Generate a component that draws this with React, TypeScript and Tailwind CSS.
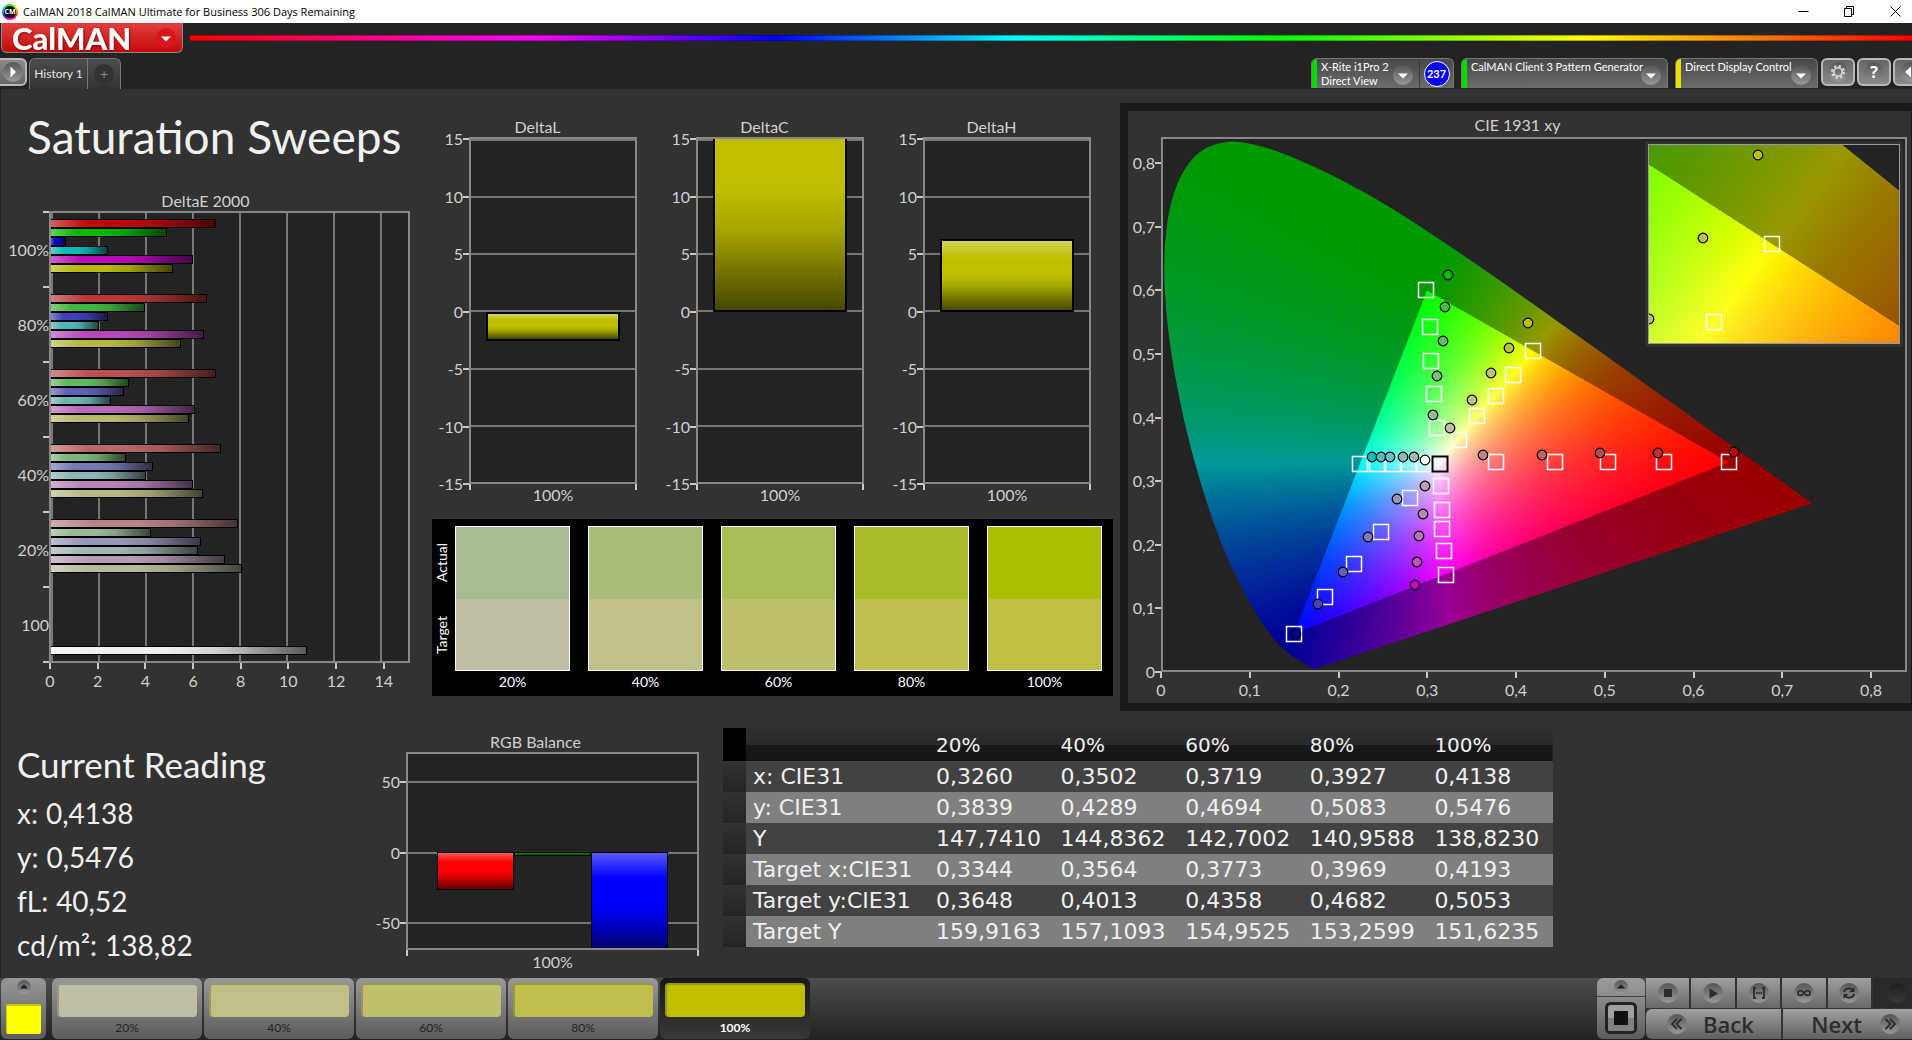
import { useEffect, useRef } from "react";
import type { ReactNode } from "react";

/* ---------- CIE 1931 data ---------- */

const LOCUS: [number, number][] = [
  [0.1741, 0.005], [0.1726, 0.0048], [0.1714, 0.0051], [0.1689, 0.0069], [0.1644, 0.0109],
  [0.1566, 0.0177], [0.151, 0.0227], [0.144, 0.0297], [0.1355, 0.0399], [0.1241, 0.0578],
  [0.1096, 0.0868], [0.0913, 0.1327], [0.0687, 0.2007], [0.0454, 0.295], [0.0235, 0.4127],
  [0.0082, 0.5384], [0.0039, 0.6548], [0.0139, 0.7502], [0.0389, 0.812], [0.0743, 0.8338],
  [0.1142, 0.8262], [0.1547, 0.8059], [0.1929, 0.7816], [0.2296, 0.7543], [0.2658, 0.7243],
  [0.3016, 0.6923], [0.3373, 0.6589], [0.3731, 0.6245], [0.4087, 0.5896], [0.4441, 0.5547],
  [0.4788, 0.5202], [0.5125, 0.4866], [0.5448, 0.4544], [0.5752, 0.4242], [0.6029, 0.3965],
  [0.627, 0.3725], [0.6658, 0.334], [0.6915, 0.3083], [0.719, 0.2809], [0.7347, 0.2653],
];

/* Colour of a chromaticity; dimmed where it lies outside the RGB triangle. */
function colourAt(x: number, y: number): [number, number, number] {
  const X = x / y;
  const Z = (1 - x - y) / y;
  const lin = [
    3.2406 * X - 1.5372 - 0.4986 * Z,
    -0.9689 * X + 1.8758 + 0.0415 * Z,
    0.0557 * X - 0.204 + 1.057 * Z,
  ];
  const gain = Math.min(...lin) >= 0 ? 255 : 153;
  const max = Math.max(...lin);
  const [r, g, b] = lin.map((v) => (gain * Math.max(v, 0)) / max);
  return [r, g, b];
}

type Domain = { x0: number; x1: number; y0: number; y1: number };

function Gamut({ x0, x1, y0, y1, w, h }: Domain & { w: number; h: number }) {
  const ref = useRef<HTMLCanvasElement>(null);
  useEffect(() => {
    const ctx = ref.current?.getContext("2d");
    if (!ctx) return;
    const W = w * 2;
    const H = h * 2;
    const field = document.createElement("canvas");
    field.width = W;
    field.height = H;
    const fctx = field.getContext("2d")!;
    const img = fctx.createImageData(W, H);
    for (let j = 0; j < H; j++) {
      const y = Math.max(y1 - ((j + 0.5) / H) * (y1 - y0), 0.001);
      for (let i = 0; i < W; i++) {
        const [r, g, b] = colourAt(x0 + ((i + 0.5) / W) * (x1 - x0), y);
        const k = (j * W + i) * 4;
        img.data[k] = r;
        img.data[k + 1] = g;
        img.data[k + 2] = b;
        img.data[k + 3] = 255;
      }
    }
    fctx.putImageData(img, 0, 0);
    const pts = LOCUS.map(([x, y]) => [((x - x0) / (x1 - x0)) * w, ((y1 - y) / (y1 - y0)) * h]);
    const at = (i: number) => pts[Math.min(Math.max(i, 0), pts.length - 1)];
    ctx.clearRect(0, 0, w, h);
    ctx.save();
    ctx.beginPath();
    ctx.moveTo(pts[0][0], pts[0][1]);
    for (let i = 0; i < pts.length - 1; i++) {
      const [p, a, b, n] = [at(i - 1), at(i), at(i + 1), at(i + 2)];
      ctx.bezierCurveTo(
        a[0] + (b[0] - p[0]) / 6,
        a[1] + (b[1] - p[1]) / 6,
        b[0] - (n[0] - a[0]) / 6,
        b[1] - (n[1] - a[1]) / 6,
        b[0],
        b[1],
      );
    }
    ctx.closePath();
    ctx.clip();
    ctx.drawImage(field, 0, 0, w, h);
    ctx.restore();
  }, [x0, x1, y0, y1, w, h]);
  return <canvas ref={ref} width={w} height={h} className="block h-full w-full" />;
}

/* Targets and measurements, in plot units (746 x 535). */
const TARGETS: [number, number][] = [
  [264, 152], [268, 189], [269, 223], [272, 256], [275, 290],
  [371, 213], [351, 237], [334, 258], [315, 278], [297, 302],
  [334, 324], [393, 324], [446, 324], [502, 324], [567, 324],
  [198, 326], [215, 326], [231, 326], [247, 326], [262, 326],
  [279, 348], [280, 372], [280, 391], [282, 413], [284, 437],
  [248, 360], [219, 394], [192, 426], [163, 459], [132, 496],
];

const MEASURED: [number, number, string][] = [
  [286, 137, "#00bf00"], [283, 169, "#45bf45"], [281, 203, "#62bb62"], [275, 238, "#7cbb7c"], [271, 277, "#98bb98"],
  [366, 185, "#bfbf00"], [347, 210, "#bfbf45"], [329, 235, "#bfbf6c"], [310, 262, "#bfbf88"], [288, 290, "#bfbfa5"],
  [210, 319, "#00bfbf"], [219, 319, "#4fbfbf"], [228, 319, "#70bdbd"], [241, 319, "#8cbaba"], [252, 319, "#a0baba"],
  [263, 322, "#ffffff"],
  [321, 317, "#ba8484"], [380, 317, "#bc6565"], [438, 315, "#bc4a4a"], [496, 315, "#bc3030"], [572, 314, "#bf0000"],
  [263, 348, "#ba9cba"], [261, 376, "#ba86ba"], [257, 398, "#bb70bb"], [255, 424, "#bc50bc"], [253, 447, "#bf00bf"],
  [235, 361, "#9898ba"], [206, 399, "#7c7cbb"], [181, 434, "#6060bb"], [156, 466, "#4444bb"], [134, 496, "#0000a0"],
];

function Marks({ targets, measured }: { targets: [number, number][]; measured: [number, number, string][] }) {
  return (
    <>
      {targets.map(([x, y], i) => (
        <rect key={i} x={x - 7.5} y={y - 7.5} width={15} height={15} fill="none" stroke="#fff" strokeWidth={1.5} />
      ))}
      {measured.map(([x, y, c], i) => (
        <circle key={i} cx={x} cy={y} r={4.8} fill={c} stroke="#000" strokeWidth={1.2} />
      ))}
    </>
  );
}

function CieChart() {
  return (
    <section className="mt-[14px] flex flex-col border-y-8 border-r border-l-8 border-[#1a1a1a] pt-[3px] pr-1 pb-[3px]">
      <h2 className="pb-0.5 text-center text-base/[21px] text-[#d0d0d0]">CIE 1931 xy</h2>
      <div className="flex">
        <div className="mt-[26px] flex h-[509px] w-[33px] flex-col items-end justify-between">
          {["0,8", "0,7", "0,6", "0,5", "0,4", "0,3", "0,2", "0,1", "0"].map((t) => (
            <AxisY key={t}>{t}</AxisY>
          ))}
        </div>
        <div className="relative h-[535px] flex-1 border-2 border-[#888] bg-[#232323]">
          <Gamut x0={0.0023} x1={0.8388} y0={0.0031} y1={0.8385} w={742} h={531} />
          <svg viewBox="-1 -1 746 535" preserveAspectRatio="none" className="absolute -inset-0.5 h-[535px] w-[calc(100%+4px)]">
            <Marks targets={TARGETS} measured={MEASURED} />
            <rect x={270.5} y={318.5} width={15} height={15} fill="none" stroke="#000" strokeWidth={2} />
          </svg>
          <div className="absolute top-0.5 right-0.5 border-[3px] border-[#303030]">
            <div className="relative h-[200px] w-[252px] border border-[#999] bg-[#232323]">
              <Gamut x0={0.3717} x1={0.4682} y0={0.4583} y1={0.5524} w={250} h={198} />
              <svg viewBox="0 0 250 198" className="absolute inset-0 h-full w-full">
                <Marks
                  targets={[[123, 99], [65, 177]]}
                  measured={[[109, 10, "#bfbf00"], [54, 93, "#bfbf45"], [0, 174, "#bfbf6c"]]}
                />
              </svg>
            </div>
          </div>
        </div>
      </div>
      <div className="ml-[33px] pr-[36px]">
        <div className="flex justify-between">
          {["0", "0,1", "0,2", "0,3", "0,4", "0,5", "0,6", "0,7", "0,8"].map((t) => (
            <AxisX key={t}>{t}</AxisX>
          ))}
        </div>
      </div>
    </section>
  );
}

/* ---------- Axis pieces ---------- */

function AxisY({ children }: { children: ReactNode }) {
  return (
    <div className="flex h-0 items-center">
      <span className="text-base/5 text-[#d0d0d0]">{children}</span>
      <span className="h-0.5 w-1.5 bg-[#c8c8c8]" />
    </div>
  );
}

function AxisX({ children }: { children: ReactNode }) {
  return (
    <div className="flex w-0 flex-col items-center">
      <span className="h-1.5 w-0.5 bg-[#c8c8c8]" />
      <span className="mt-0.5 text-base/5 text-[#d0d0d0]">{children}</span>
    </div>
  );
}

/* ---------- DeltaE chart ---------- */

const DE_MAX = 15.1;
const DELTA_E: { label: string; bars: [number, string][] }[] = [
  { label: "100%", bars: [[6.99, "bg-[#bf0808]"], [4.89, "bg-[#08b808]"], [0.62, "bg-[#0808bf]"], [2.39, "bg-[#08b8b8]"], [6, "bg-[#b808b8]"], [5.16, "bg-[#b8b808]"]] },
  { label: "80%", bars: [[6.58, "bg-[#ba3838]"], [3.98, "bg-[#40b840]"], [2.39, "bg-[#4040b8]"], [2.05, "bg-[#50b5b5]"], [6.46, "bg-[#b848b8]"], [5.49, "bg-[#b8b848]"]] },
  { label: "60%", bars: [[7, "bg-[#ba5050]"], [3.31, "bg-[#60b860]"], [3.1, "bg-[#6060b8]"], [2.52, "bg-[#70b5b5]"], [6.08, "bg-[#b868b8]"], [5.83, "bg-[#b8b868]"]] },
  { label: "40%", bars: [[7.17, "bg-[#ba6666]"], [3.19, "bg-[#7ab87a]"], [4.32, "bg-[#7a7ab8]"], [4.03, "bg-[#8cb5b5]"], [6, "bg-[#b884b8]"], [6.42, "bg-[#b8b884]"]] },
  { label: "20%", bars: [[7.92, "bg-[#ba8484]"], [4.23, "bg-[#98b898]"], [6.33, "bg-[#9898b8]"], [6.21, "bg-[#a2b5b5]"], [7.34, "bg-[#b89cb8]"], [8.09, "bg-[#b8b89c]"]] },
  { label: "100", bars: [[10.82, "bg-[#efefef]"]] },
];

function DeltaEChart() {
  return (
    <section className="mt-6">
      <h2 className="text-center text-base/5 text-[#d0d0d0]">DeltaE 2000</h2>
      <div className="flex">
        <div className="flex w-12 flex-col items-end">
          {DELTA_E.map((g) => (
            <div key={g.label} className="flex h-[75px] w-full items-start justify-end">
              <span className="flex h-[78px] flex-1 items-center justify-end text-base/5 text-[#d0d0d0]">{g.label}</span>
              <span className="-ml-1.5 h-0.5 w-1.5 bg-[#c8c8c8]" />
            </div>
          ))}
          <span className="h-0.5 w-1.5 bg-[#c8c8c8]" />
        </div>
        <div className="relative flex-1 border-2 border-[#888] bg-[#232323]">
          <div className="absolute inset-y-0 left-0 flex w-[92.7%] justify-between">
            {[0, 2, 4, 6, 8, 10, 12, 14].map((v) => (
              <span key={v} className="w-0.5 bg-[#777]" />
            ))}
          </div>
          <div className="relative">
            {DELTA_E.map((g) => (
              <div key={g.label} className="flex h-[75px] flex-col justify-start py-1.5 last:h-[73px] last:justify-end">
                {g.bars.map(([v, c], i) => (
                  <div
                    key={i}
                    className={`h-[9px] border border-l-0 border-black bg-linear-[90deg,#ffffff59,#ffffff00_22%,#00000000_45%,#00000020_65%,#000000a0] ${c}`}
                    style={{ width: `${(v / DE_MAX) * 100}%` }}
                  />
                ))}
              </div>
            ))}
          </div>
        </div>
      </div>
      <div className="ml-[49px]">
        <div className="flex w-[92.7%] justify-between">
          {["0", "2", "4", "6", "8", "10", "12", "14"].map((t) => (
            <AxisX key={t}>{t}</AxisX>
          ))}
        </div>
      </div>
    </section>
  );
}

/* ---------- Vertical bar charts ---------- */

const SHADE = "bg-linear-[180deg,#ffffff59,#ffffff00_25%,#00000000_48%,#00000020_65%,#000000a0]";

function DeltaChart({ title, value }: { title: string; value: number }) {
  const top = ((15.2 - Math.max(value, 0)) / 30.2) * 100;
  const height = (Math.abs(value) / 30.2) * 100;
  return (
    <section>
      <h2 className="text-center text-base/5 text-[#d0d0d0]">{title}</h2>
      <div className="flex pr-[14px]">
        <div className="mt-0.5 flex h-[345px] w-[45px] flex-col items-end justify-between">
          {["15", "10", "5", "0", "-5", "-10", "-15"].map((t) => (
            <AxisY key={t}>{t}</AxisY>
          ))}
        </div>
        <div className="relative h-[347px] flex-1 overflow-hidden border-2 border-[#888] bg-[#232323]">
          <div className="absolute inset-x-0 top-0 -bottom-0.5 flex flex-col justify-between">
            {[15, 10, 5, 0, -5, -10, -15].map((v) => (
              <span key={v} className="h-0.5 bg-[#777]" />
            ))}
          </div>
          <div
            className={`absolute inset-x-[9%] border-2 border-black bg-[#bfbf00] ${SHADE}`}
            style={{ top: `${top}%`, height: `${height}%` }}
          />
        </div>
      </div>
      <div className="mr-[14px] ml-[45px] flex items-start justify-between text-base/5 text-[#d0d0d0]">
        <span className="h-1.5 w-0.5 bg-[#c8c8c8]" />
        <span className="mt-px">100%</span>
        <span className="h-1.5 w-0.5 bg-[#c8c8c8]" />
      </div>
    </section>
  );
}

function RgbBalance() {
  const bars: [number, string][] = [[27, "bg-[#ff0000]"], [3, "bg-[#008000]"], [72, "bg-[#0000ff]"]];
  return (
    <section className="w-[327px]">
      <h2 className="text-center text-base/5 text-[#d0d0d0]">RGB Balance</h2>
      <div className="flex">
        <div className="mt-[30px] flex h-[141px] w-[34px] flex-col items-end justify-between">
          {["50", "0", "-50"].map((t) => (
            <AxisY key={t}>{t}</AxisY>
          ))}
        </div>
        <div className="relative h-[198px] flex-1 overflow-hidden border-2 border-[#888] bg-[#232323]">
          <div className="absolute inset-x-0 top-[27px] flex h-[143px] flex-col justify-between">
            {[50, 0, -50].map((v) => (
              <span key={v} className="h-0.5 bg-[#777]" />
            ))}
          </div>
          <div className="absolute inset-x-[10%] top-[98px] bottom-0 flex items-start">
            {bars.map(([v, c]) => (
              <div key={c} className={`flex-1 border border-black ${c} ${SHADE}`} style={{ height: `${v * 1.41}px` }} />
            ))}
          </div>
        </div>
      </div>
      <div className="ml-[34px] flex items-start justify-between text-base/5 text-[#d0d0d0]">
        <span className="h-1.5 w-0.5 bg-[#c8c8c8]" />
        <span className="mt-0.5">100%</span>
        <span className="h-1.5 w-0.5 bg-[#c8c8c8]" />
      </div>
    </section>
  );
}

/* ---------- Swatches ---------- */

const SWATCHES = [
  { label: "20%", actual: "bg-[#a8bc94]", target: "bg-[#bfbfa5]", tile: "bg-[#bfbfa5]" },
  { label: "40%", actual: "bg-[#a8bc78]", target: "bg-[#bfbf88]", tile: "bg-[#bfbf88]" },
  { label: "60%", actual: "bg-[#a8bc58]", target: "bg-[#bfbf6c]", tile: "bg-[#bfbf6c]" },
  { label: "80%", actual: "bg-[#a8bc28]", target: "bg-[#bfbf4c]", tile: "bg-[#bfbf4c]" },
  { label: "100%", actual: "bg-[#aabf00]", target: "bg-[#bfbf46]", tile: "bg-[#bfbf00]" },
];

function SwatchPanel() {
  return (
    <section className="mt-[14px] mr-[-8px] ml-2 flex bg-black pt-[7px] pr-[11px] pb-1 text-sm/5 text-white">
      <div className="mr-[3px] flex h-[145px] w-5 flex-col">
        <div className="flex flex-1 items-center justify-center [writing-mode:sideways-lr]">Actual</div>
        <div className="flex flex-1 items-center justify-center [writing-mode:sideways-lr]">Target</div>
      </div>
      <div className="grid flex-1 grid-cols-5 gap-[18px]">
        {SWATCHES.map((s) => (
          <div key={s.label}>
            <div className="flex h-[145px] flex-col border border-white">
              <div className={`flex-1 ${s.actual}`} />
              <div className={`flex-1 ${s.target}`} />
            </div>
            <div className="pt-px text-center">{s.label}</div>
          </div>
        ))}
      </div>
    </section>
  );
}

/* ---------- Table ---------- */

const ROWS = [
  ["x: CIE31", "0,3260", "0,3502", "0,3719", "0,3927", "0,4138"],
  ["y: CIE31", "0,3839", "0,4289", "0,4694", "0,5083", "0,5476"],
  ["Y", "147,7410", "144,8362", "142,7002", "140,9588", "138,8230"],
  ["Target x:CIE31", "0,3344", "0,3564", "0,3773", "0,3969", "0,4193"],
  ["Target y:CIE31", "0,3648", "0,4013", "0,4358", "0,4682", "0,5053"],
  ["Target Y", "159,9163", "157,1093", "154,9525", "153,2599", "151,6235"],
];

function DataTable() {
  return (
    <table className="mt-[17px] h-fit w-[830px] table-fixed border-collapse text-left font-['DejaVu_Sans',sans-serif] text-[22px]/[30px] text-[#f0f0f0]">
      <colgroup>
        <col className="w-[23px]" />
        <col className="w-[184px]" />
        <col span={5} />
      </colgroup>
      <thead>
        <tr className="h-[33px] bg-linear-[180deg,#303030,#2a2a2a_50%,#191919_50%,#141414]">
          <td className="bg-black" />
          <td />
          {["20%", "40%", "60%", "80%", "100%"].map((h) => (
            <th key={h} scope="col" className="pl-1.5 text-xl/[30px] font-normal">{h}</th>
          ))}
        </tr>
      </thead>
      <tbody>
        {ROWS.map((r) => (
          <tr key={r[0]} className="h-[31px] odd:bg-[#424242] even:bg-[#7f7f7f]">
            <td className="bg-linear-[180deg,#333,#242424]" />
            <th scope="row" className="pl-[7px] font-normal whitespace-nowrap">{r[0]}</th>
            {r.slice(1).map((v, i) => (
              <td key={i} className="pl-1.5">{v}</td>
            ))}
          </tr>
        ))}
      </tbody>
    </table>
  );
}

/* ---------- Header ---------- */

function DropArrow({ red = false }: { red?: boolean }) {
  return (
    <svg viewBox="0 0 20 20" className="size-5 shrink-0" aria-hidden="true">
      <circle cx="10" cy="10" r="10" fill={red ? "#d8161c" : "url(#knob)"} />
      <path d="M5 8.5h10l-5 5z" fill="#fff" />
    </svg>
  );
}

function Device({ colour, width, lines, children }: { colour: string; width: string; lines: string[]; children?: ReactNode }) {
  return (
    <div className={`flex h-[30px] overflow-hidden rounded-t-md border border-b-0 border-[#777] bg-linear-[180deg,#484848,#6c6c6c] ${width}`}>
      <span className={`w-[5px] shrink-0 ${colour}`} />
      <button type="button" className="flex min-w-0 flex-1 justify-between pl-1 text-left text-[11px]/[14px] whitespace-nowrap text-white">
        <span className="flex min-w-0 flex-col pt-px">
          {lines.map((l) => (
            <span key={l}>{l}</span>
          ))}
        </span>
        <span className="mt-1.5 mr-1.5"><DropArrow /></span>
      </button>
      {children}
    </div>
  );
}

const SQUARE_BTN = "flex h-7 w-[34px] shrink-0 items-center justify-center rounded-md border-2 border-[#b8b8b8] bg-linear-[180deg,#666,#8a8a8a]";

function Header() {
  return (
    <header className="bg-[#232323]">
      <div className="flex h-[23px] items-center bg-white pl-0.5 text-black">
        <span className="flex size-4 items-center justify-center rounded-full bg-conic-[from_0deg,#30e030,#e0e000,#ff2020,#ff00c0,#3030ff,#00d0d0,#30e030]">
          <span className="flex size-3 items-center justify-center rounded-full bg-black font-['Open_Sans',sans-serif] text-[7px]/3 font-bold text-white">CM</span>
        </span>
        <h1 className="ml-[5px] font-['Open_Sans',sans-serif] text-[11px]/5">CalMAN 2018 CalMAN Ultimate for Business 306 Days Remaining</h1>
        <div className="ml-auto flex items-center">
          <button type="button" aria-label="Minimize" className="flex h-5 w-[46px] items-center justify-center">
            <svg viewBox="0 0 11 11" className="size-[11px]"><path d="M.5 5.5h10" stroke="#000" /></svg>
          </button>
          <button type="button" aria-label="Restore" className="flex h-5 w-[46px] items-center justify-center">
            <svg viewBox="0 0 11 11" className="size-[11px]" fill="none" stroke="#000"><path d="M.5 2.5h7v8h-7zM2.5 2.5v-2h7v8h-2" /></svg>
          </button>
          <button type="button" aria-label="Close" className="flex h-5 w-10 items-center justify-center pl-1.5">
            <svg viewBox="0 0 11 11" className="size-[11px]"><path d="M.5.5l10 10M10.5.5l-10 10" stroke="#000" /></svg>
          </button>
        </div>
      </div>
      <div className="flex items-start">
        <button type="button" className="ml-px flex h-[30px] w-[182px] items-center justify-between rounded-b-md border border-t-0 border-[#888] bg-linear-[180deg,#e04040,#c80808] pr-1.5 pl-2.5">
          <span className="font-['Lato',sans-serif] text-[31px]/[30px] font-black text-white drop-shadow-[1px_1px_1px_#0006]">CalMAN</span>
          <DropArrow red />
        </button>
        <div className="mt-3 ml-[7px] h-1.5 flex-1 border-y border-black/30 bg-linear-[90deg,#f00,#f0f_20%,#00f_34%,#0ff_48%,#0f0_63%,#ff0_81%,#f00]" />
      </div>
      <div className="mt-[5px] flex items-start overflow-hidden">
        <button type="button" aria-label="Show panel" className="flex h-7 w-[27px] items-center justify-center rounded-r-md border-2 border-l-0 border-[#b8b8b8] bg-linear-[180deg,#8a8a8a,#666]">
          <svg viewBox="0 0 20 20" className="size-5"><circle cx="10" cy="10" r="10" fill="url(#knob)" /><path d="M7.5 4.5v11l5.5-5.5z" fill="#fff" /></svg>
        </button>
        <div className="ml-0.5 flex h-[31px] rounded-t-md border border-b-0 border-[#777] bg-linear-[180deg,#4c4c4c,#333]">
          <button type="button" className="w-[58px] border-r border-[#777] text-xs/[30px] text-[#e6e6e6]">History 1</button>
          <button type="button" aria-label="Add history" className="flex w-8 items-center justify-center">
            <span className="size-5 rounded-full bg-[#333] text-center text-sm/5 text-[#888]">+</span>
          </button>
        </div>
        <div className="ml-auto flex items-start">
          <Device colour="bg-[#00dd00]" width="w-[143px]" lines={["X-Rite i1Pro 2", "Direct View"]}>
            <span className="flex w-[34px] shrink-0 items-center justify-center border-l border-[#3a3a3a]">
              <span className="size-[26px] rounded-full border border-white bg-[#0000ff] text-center text-[11px]/6 font-bold text-white">237</span>
            </span>
          </Device>
          <span className="w-[7px]" />
          <Device colour="bg-[#00dd00]" width="w-[207px]" lines={["CalMAN Client 3 Pattern Generator"]} />
          <span className="w-[7px]" />
          <Device colour="bg-[#e8e000]" width="w-[143px]" lines={["Direct Display Control"]} />
          <div className="-mr-[15px] ml-[3px] flex gap-0.5">
            <button type="button" aria-label="Settings" className={SQUARE_BTN}>
              <svg viewBox="0 0 20 20" className="size-5">
                <circle cx="10" cy="10" r="10" fill="url(#knob)" />
                <circle cx="10" cy="10" r="4.2" fill="none" stroke="#ddd" strokeWidth="1.6" />
                <circle cx="10" cy="10" r="6" fill="none" stroke="#ddd" strokeWidth="2" strokeDasharray="2.35 2.362" />
              </svg>
            </button>
            <button type="button" aria-label="Help" className={SQUARE_BTN}>
              <span className="size-5 rounded-full bg-linear-[180deg,#555,#8c8c8c] text-center font-['Open_Sans',sans-serif] text-base/5 font-bold text-white">?</span>
            </button>
            <button type="button" aria-label="Collapse" className={SQUARE_BTN}>
              <svg viewBox="0 0 20 20" className="size-5"><circle cx="10" cy="10" r="10" fill="url(#knob)" /><path d="M11 4.5v11l-6-5.5z" fill="#fff" /></svg>
            </button>
          </div>
        </div>
      </div>
    </header>
  );
}

/* ---------- Footer ---------- */

function Knob({ children }: { children?: ReactNode }) {
  return (
    <svg viewBox="0 0 20 20" className="size-5" fill="none" stroke="#2c2c2c" strokeWidth="1.8" aria-hidden="true">
      <circle cx="10" cy="10" r="10" fill="url(#knob)" stroke="none" />
      {children}
    </svg>
  );
}

const CTRL = "flex h-[30px] flex-1 items-center justify-center border-r-2 border-[#333] bg-linear-[180deg,#a0a0a0,#686868]";

function Footer() {
  return (
    <footer className="flex h-[62px] items-start bg-linear-[180deg,#4c4c4c,#222]">
      <button type="button" aria-label="Current colour" className="ml-px flex h-[61px] w-[45px] flex-col items-center justify-between rounded-md bg-linear-[180deg,#989898,#5c5c5c] pt-0.5 pb-[5px]">
        <svg viewBox="0 0 14 14" className="size-3.5"><circle cx="7" cy="7" r="7" fill="url(#knob)" /><path d="M3 8.5h8l-4-4z" fill="#222" /></svg>
        <span className="h-[30px] w-[35px] rounded-xs border-t-2 border-l border-[#c8c800] bg-[#ffff00]" />
      </button>
      <div className="ml-1.5 flex gap-0.5">
        {SWATCHES.map((s, i) => (
          <button
            key={s.label}
            type="button"
            className={`flex h-[61px] w-[150px] flex-col items-center rounded-md pt-[5px] text-xs/[22px] ${
              i === 4 ? "bg-linear-[180deg,#181818,#383838] font-bold text-white" : "bg-linear-[180deg,#989898,#5c5c5c] text-[#222]"
            }`}
          >
            <span className={`h-9 w-[140px] rounded-sm border-t-2 border-l-2 border-black/20 ${s.tile}`} />
            {s.label}
          </button>
        ))}
      </div>
      <div className="ml-auto flex">
        <div className="flex h-[61px] w-12 flex-col">
          <button type="button" aria-label="Expand" className="flex h-[18px] items-center justify-center rounded-t-md bg-linear-[180deg,#9c9c9c,#8c8c8c]">
            <svg viewBox="0 0 14 14" className="size-3.5"><circle cx="7" cy="7" r="7" fill="url(#knob)" /><path d="M2.5 8.5h9l-4.5-4z" fill="#222" /></svg>
          </button>
          <button type="button" aria-label="Window pattern" className="mt-px flex flex-1 items-center justify-center rounded-b-md bg-linear-[180deg,#8c8c8c,#5c5c5c]">
            <svg viewBox="0 0 32 32" className="size-8">
              <rect x="1.5" y="1.5" width="29" height="29" rx="4" fill="#a0a0a0" stroke="#222" strokeWidth="3" />
              <path d="M3 16h26v11a2 2 0 0 1-2 2H5a2 2 0 0 1-2-2z" fill="#808080" />
              <rect x="9" y="9" width="14" height="14" fill="#111" />
            </svg>
          </button>
        </div>
        <div className="ml-px flex w-[266px] flex-col">
          <div className="flex rounded-tl-md">
            <button type="button" aria-label="Stop" className={CTRL}><Knob><path d="M6 6h8v8H6z" fill="#2c2c2c" stroke="none" /></Knob></button>
            <button type="button" aria-label="Play" className={CTRL}><Knob><path d="M6.5 5.5v10l8.5-5z" fill="#2c2c2c" stroke="none" /></Knob></button>
            <button type="button" aria-label="Read series" className={CTRL}><Knob><path d="M7 5H5v10h2M13 5h2v10h-2" /><path d="M7 10h6" strokeDasharray="1.5 .75" /></Knob></button>
            <button type="button" aria-label="Loop" className={CTRL}><Knob><path d="M10 10c-2-3-6-3.5-6 0s4 3 6 0 6-3.5 6 0-4 3-6 0z" /></Knob></button>
            <button type="button" aria-label="Refresh" className={CTRL}><Knob><path d="M5 9c.5-3.500 6-5 9-1.800M15 11c-.5 3.500-6 5-9 1.800" /><path d="M15.500 4v5h-5zM4.500 16v-5h5z" fill="#2c2c2c" stroke="none" /></Knob></button>
            <div className="flex h-[30px] w-[39px] items-center justify-center bg-[#2a2a2a] pl-2"><span className="size-5 rounded-full bg-linear-[180deg,#1c1c1c,#3c3c3c]" /></div>
          </div>
          <div className="mt-px flex font-['Open_Sans',sans-serif] text-[22px]/[30px] font-semibold text-[#2c2c2c]">
            <button type="button" className="flex h-[30px] w-[137px] items-center gap-4 rounded-l-md border-r-2 border-[#333] bg-linear-[180deg,#a0a0a0,#606060] pl-[21px]">
              <Knob><path d="M10 5l-5 5 5 5M14.500 5l-5 5 5 5" /></Knob>Back
            </button>
            <button type="button" className="flex h-[30px] flex-1 items-center justify-end gap-[18px] bg-linear-[180deg,#a0a0a0,#606060] pr-3">
              Next<Knob><path d="M10 5l5 5-5 5M5.500 5l5 5-5 5" /></Knob>
            </button>
          </div>
        </div>
      </div>
    </footer>
  );
}

export default function App() {
  return (
    <div className="flex min-h-screen flex-col bg-[#323232] font-['Lato',sans-serif] text-[#f0f0f0]">
      <svg className="absolute size-0" aria-hidden="true">
        <defs>
          <linearGradient id="knob" x1="0" y1="0" x2="0" y2="1">
            <stop offset="0" stopColor="#555" />
            <stop offset="1" stopColor="#999" />
          </linearGradient>
        </defs>
      </svg>
      <Header />
      <main className="flex flex-1 flex-col border-l border-[#222]">
        <div className="grid grid-cols-[423fr_696fr_792fr]">
          <div className="pr-[14px]">
            <h1 className="mt-[18px] ml-[26px] text-[46px]/[60px] whitespace-nowrap">Saturation Sweeps</h1>
            <DeltaEChart />
          </div>
          <div className="pt-7 pr-[15px]">
            <div className="grid grid-cols-3">
              <DeltaChart title="DeltaL" value={-2.6} />
              <DeltaChart title="DeltaC" value={21} />
              <DeltaChart title="DeltaH" value={6.4} />
            </div>
            <SwatchPanel />
          </div>
          <CieChart />
        </div>
        <div className="flex">
          <section className="w-[371px] pt-7 pl-4">
            <h2 className="text-[35px]/[50px] whitespace-nowrap">Current Reading</h2>
            <dl className="mt-0.5 text-[28px]/[44px]">
              {[["x", "0,4138"], ["y", "0,5476"], ["fL", "40,52"], ["cd/m²", "138,82"]].map(([k, v]) => (
                <div key={k} className="flex gap-2">
                  <dt>{k}:</dt>
                  <dd>{v}</dd>
                </div>
              ))}
            </dl>
          </section>
          <div className="pt-[21px]">
            <RgbBalance />
          </div>
          <div className="ml-6">
            <DataTable />
          </div>
        </div>
      </main>
      <Footer />
    </div>
  );
}
